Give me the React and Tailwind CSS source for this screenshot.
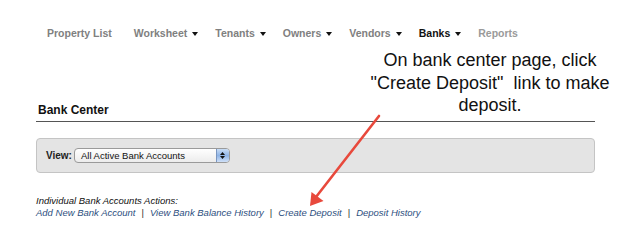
import React from 'react';

const navItems = [
  { label: 'Property List', menu: false, tone: 'text-[#808080]' },
  { label: 'Worksheet', menu: true, tone: 'text-[#808080]' },
  { label: 'Tenants', menu: true, tone: 'text-[#808080]' },
  { label: 'Owners', menu: true, tone: 'text-[#808080]' },
  { label: 'Vendors', menu: true, tone: 'text-[#808080]' },
  { label: 'Banks', menu: true, tone: 'text-[#111111]' },
  { label: 'Reports', menu: false, tone: 'text-[#9a9a9a]' },
];

const actions = ['Add New Bank Account', 'View Bank Balance History', 'Create Deposit', 'Deposit History'];

function Caret() {
  return (
    <svg width="6" height="4" viewBox="0 0 6 4" className="mt-[2px]">
      <path d="M0 0h6L3 4z" fill="#111" />
    </svg>
  );
}

export default function App() {
  return (
    <div className="relative w-[631px] h-[243px] bg-white overflow-hidden font-['Liberation_Sans',Arial,sans-serif]">
      {/* top nav */}
      <nav className="flex items-center pt-[26px] pl-[47px] text-[10.5px] leading-[14px] font-bold">
        {navItems.map((item, i) => (
          <div
            key={item.label}
            className={`flex items-center gap-[5px] ${item.tone} ${i === 0 ? 'mr-[22px]' : 'mr-[17px]'}`}
          >
            <span>{item.label}</span>
            {item.menu && <Caret />}
          </div>
        ))}
      </nav>

      <div className="ml-[36px] w-[559px] mt-[63px]">
        <div className="border-b border-[#555555] pb-[4px] pl-[2px]">
          <h2 className="text-[12px] leading-[14px] font-bold text-[#111]">Bank Center</h2>
        </div>

        <div className="mt-[16px] h-[35px] flex items-center px-[9px] gap-[2px] bg-[#e4e4e4] border border-[#c4c4c4] rounded-[4px]">
          <span className="text-[10px] font-bold text-[#222]">View:</span>
          <div className="flex items-center h-[15px] w-[156px] rounded-[4px] border border-[#9a9a9a] bg-gradient-to-b from-white to-[#ececec] overflow-hidden">
            <span className="flex-1 pl-[6px] text-[9.5px] leading-[13px] text-[#111]">All Active Bank Accounts</span>
            <span className="flex flex-col items-center justify-center gap-[1px] w-[13px] h-full bg-gradient-to-b from-[#c9ddf5] via-[#8fb4e6] to-[#cfe0f7] border-l border-[#7a96c0]">
              <svg width="5" height="3" viewBox="0 0 5 3"><path d="M0 3h5L2.5 0z" fill="#111" /></svg>
              <svg width="5" height="3" viewBox="0 0 5 3"><path d="M0 0h5L2.5 3z" fill="#111" /></svg>
            </span>
          </div>
        </div>

        <div className="mt-[22px] text-[9.5px] leading-[12px] italic">
          <div className="text-[#111]">Individual Bank Accounts Actions:</div>
          <div className="flex items-center gap-[6px]">
            {actions.map((a, i) => (
              <React.Fragment key={a}>
                {i > 0 && <span className="not-italic text-[#333]">|</span>}
                <a className="text-[#2d4f80]">{a}</a>
              </React.Fragment>
            ))}
          </div>
        </div>
      </div>

      {/* annotation callout */}
      <div className="absolute left-[360px] top-[49px] w-[260px] text-center text-[18px] leading-[22.5px] text-[#111]">
        <p>On bank center page, click</p>
        <p>{'"Create Deposit"\u00a0 link to make'}</p>
        <p>deposit.</p>
      </div>

      <svg className="absolute left-0 top-0" width="631" height="243" viewBox="0 0 631 243">
        <line x1="379" y1="116" x2="316" y2="197" stroke="#e8493c" strokeWidth="2.6" strokeLinecap="round" />
        <path d="M310 206 L311.5 192 L323.5 201 Z" fill="#e8493c" />
      </svg>
    </div>
  );
}
